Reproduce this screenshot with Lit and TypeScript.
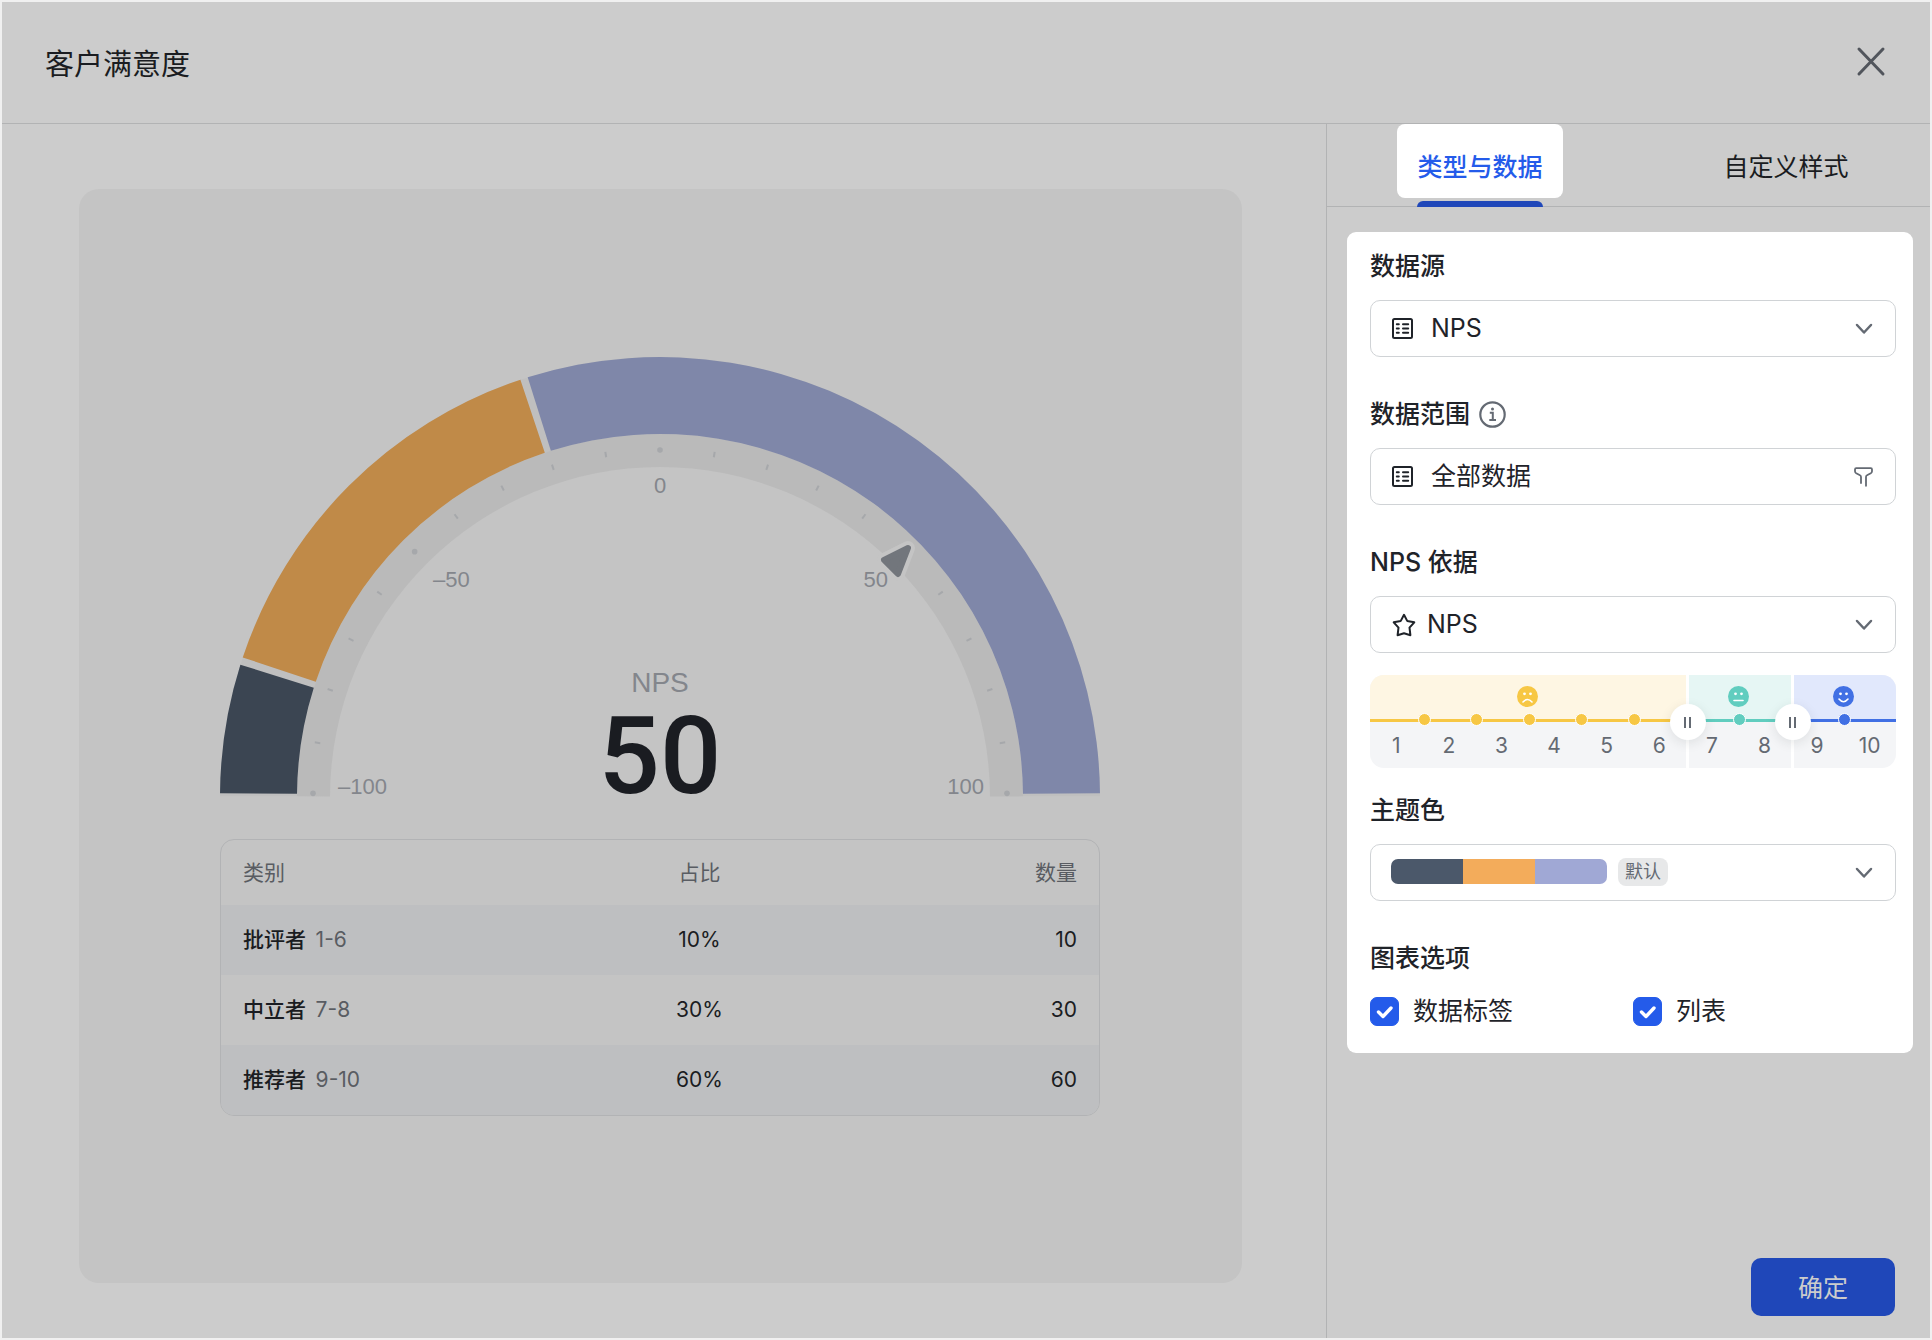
import { LitElement, html, css, svg } from "lit";
import { customElement, state } from "lit/decorators.js";

const CX = 440;
const CY = 440;

const polar = (r: number, deg: number): [number, number] => {
  const a = (deg * Math.PI) / 180;
  return [CX - r * Math.cos(a), CY - r * Math.sin(a)];
};

const ringPath = (outer: number, inner: number, from: number, to: number) => {
  const [x1, y1] = polar(outer, from);
  const [x2, y2] = polar(outer, to);
  const [x3, y3] = polar(inner, to);
  const [x4, y4] = polar(inner, from);
  return `M${x1} ${y1}A${outer} ${outer} 0 0 1 ${x2} ${y2}L${x3} ${y3}A${inner} ${inner} 0 0 0 ${x4} ${y4}Z`;
};

const FONT = css`"Inter", "Noto Sans CJK SC", sans-serif`;

@customElement("nps-gauge")
export class NpsGauge extends LitElement {
  static styles = css`
    :host {
      display: block;
    }
    svg {
      display: block;
      width: 100%;
      overflow: visible;
    }
    text {
      font-family: "Liberation Sans", sans-serif;
      font-size: 22px;
      fill: #83868c;
    }
    .caption {
      font-size: 28px;
      text-anchor: middle;
    }
    .score {
      font-family: Roboto, sans-serif;
      font-size: 108px;
      font-weight: 500;
      fill: #1a1c21;
      text-anchor: middle;
    }
    .middle {
      text-anchor: middle;
    }
    .end {
      text-anchor: end;
    }
  `;

  private segments = [
    { share: 10, color: "#3b4552" },
    { share: 30, color: "#c08a48" },
    { share: 60, color: "#7f87a9" },
  ];

  private renderTick(i: number) {
    const deg = i * 9;
    if (i % 5 === 0) {
      const [x, y] = polar(347, Math.min(Math.max(deg, 0.6), 179.4));
      return svg`<circle cx=${x} cy=${y} r="2.8" fill="#a6a8ab" />`;
    }
    const [x1, y1] = polar(344, deg);
    const [x2, y2] = polar(349.5, deg);
    return svg`<line x1=${x1} y1=${y1} x2=${x2} y2=${y2} stroke="#a6a8ab" stroke-width="2" />`;
  }

  render() {
    let sum = 0;
    const arcs = this.segments.map((s) => {
      const from = sum * 1.8 + 0.5;
      sum += s.share;
      return svg`<path d=${ringPath(440, 363, from, sum * 1.8 - 0.5)} fill=${s.color} />`;
    });
    return html`
      <svg viewBox="0 0 880 440" role="img" aria-label="NPS 50">
        <path d=${ringPath(440, 363, 0.1, 179.9)} fill="#bfbfbf" />
        <path d=${ringPath(363, 330, 0.1, 179.9)} fill="#bababa" />
        ${arcs}
        ${Array.from({ length: 21 }, (_, i) => i)
          .filter((i) => i !== 15)
          .map((i) => this.renderTick(i))}
        <path
          d="M688 191L664 203L678 217Z"
          fill="#c4c4c4"
          stroke="#c4c4c4"
          stroke-width="14"
          stroke-linejoin="round"
        />
        <path
          d="M688 191L664 203L678 217Z"
          fill="#72767c"
          stroke="#72767c"
          stroke-width="6"
          stroke-linejoin="round"
        />
        <text x="118" y="437">–100</text>
        <text x="213" y="230">–50</text>
        <text class="middle" x="440" y="136">0</text>
        <text class="end" x="668" y="230">50</text>
        <text class="end" x="764" y="437">100</text>
        <text class="caption" x="440" y="335">NPS</text>
        <text class="score" x="440" y="436">50</text>
      </svg>
    `;
  }
}

@customElement("score-scale")
export class ScoreScale extends LitElement {
  static styles = css`
    :host {
      display: block;
      position: relative;
      font-family: ${FONT};
    }
    .track {
      display: grid;
      grid-template-columns: 6fr 2fr 2fr;
      border-radius: 14px;
      overflow: hidden;
    }
    .segment {
      position: relative;
      background: #f4f5f7;
    }
    .segment + .segment::before {
      content: "";
      position: absolute;
      inset: 0 auto 0 0;
      width: 3px;
      background: #fff;
      z-index: 1;
    }
    .mood {
      height: 42px;
      padding-bottom: 2px;
      display: flex;
      justify-content: center;
      align-items: center;
      border-bottom: 3px solid var(--tone);
      background: var(--tint);
    }
    .mood svg {
      display: block;
    }
    .bad {
      --tone: #f7c744;
      --tint: #fef6e3;
    }
    .neutral {
      --tone: #61cdbf;
      --tint: #e6f6f4;
    }
    .good {
      --tone: #4170e4;
      --tint: #e1e8fc;
    }
    .numbers {
      display: flex;
      height: 46px;
      line-height: 48px;
      font-size: 21px;
      color: #646a73;
    }
    .numbers span {
      flex: 1;
      text-align: center;
    }
    .dot {
      position: absolute;
      top: 38px;
      width: 11px;
      height: 11px;
      margin-left: -5px;
      border: 1px solid #fff;
      border-radius: 50%;
      background: var(--tone);
    }
    .handle {
      position: absolute;
      top: 29px;
      width: 36px;
      height: 36px;
      margin-left: -16px;
      padding: 0;
      border: 0;
      border-radius: 50%;
      background: #fff;
      box-shadow: 0 3px 12px rgba(31, 35, 41, 0.1);
      display: flex;
      align-items: center;
      justify-content: center;
      gap: 3px;
      z-index: 2;
    }
    .handle i {
      width: 2px;
      height: 11px;
      background: #646a73;
    }
  `;

  private groups = [
    { tone: "bad", from: 1, to: 6, mouth: "M6 16Q10.5 11 15 16" },
    { tone: "neutral", from: 7, to: 8, mouth: "M6 14.5H15" },
    { tone: "good", from: 9, to: 10, mouth: "M6 13Q10.5 18.5 15 13" },
  ];

  private range(a: number, b: number) {
    return Array.from({ length: b - a + 1 }, (_, i) => a + i);
  }

  render() {
    return html`
      <div class="track">
        ${this.groups.map(
          (g) => html`
            <div class="segment ${g.tone}">
              <div class="mood">
                <svg width="21" height="21" viewBox="0 0 21 21" aria-hidden="true">
                  <circle cx="10.5" cy="10.5" r="10.5" fill="var(--tone)" />
                  <circle cx="7.5" cy="7.8" r="1.4" fill="#fff" />
                  <circle cx="13.5" cy="7.8" r="1.4" fill="#fff" />
                  <path d=${g.mouth} fill="none" stroke="#fff" stroke-width="1.6" stroke-linecap="round" />
                </svg>
              </div>
              <div class="numbers">${this.range(g.from, g.to).map((n) => html`<span>${n}</span>`)}</div>
            </div>
          `,
        )}
      </div>
      ${this.groups.flatMap((g) =>
        this.range(g.from, g.to - 1).map(
          (n) => html`<span class="dot ${g.tone}" style="left:${n * 10}%"></span>`,
        ),
      )}
      ${[6, 8].map(
        (n) => html`
          <button class="handle" style="left:${n * 10}%" aria-label="分界 ${n}"><i></i><i></i></button>
        `,
      )}
    `;
  }
}

const tableIcon = html`
  <svg width="21" height="21" viewBox="0 0 21 21" fill="none" stroke="currentColor" stroke-width="2" aria-hidden="true">
    <rect x="1" y="1" width="19" height="19" rx="1.5" />
    <path d="M4.8 6.3H6.8M11 6.3H16.2M4.8 10.5H6.8M11 10.5H16.2M4.8 14.7H6.8M11 14.7H16.2" stroke-linecap="round" />
  </svg>
`;

const starIcon = html`
  <svg width="24" height="24" viewBox="0 0 24 24" fill="none" stroke="currentColor" stroke-width="2" stroke-linejoin="round" aria-hidden="true">
    <path d="M12 1.8L15.2 7.9L22.3 9.3L17.5 14.7L18.4 22.2L12 20.3L5.6 22.2L6.5 14.7L1.7 9.3L8.8 7.9Z" />
  </svg>
`;

const chevron = html`
  <svg class="tail" width="18" height="12" viewBox="0 0 18 12" fill="none" stroke="#646a73" stroke-width="2.5" stroke-linecap="round" stroke-linejoin="round" aria-hidden="true">
    <path d="M2 2L9 9.5L16 2" />
  </svg>
`;

@customElement("app-root")
export class AppRoot extends LitElement {
  static styles = css`
    :host {
      display: block;
      font-family: ${FONT};
      color: #1f2329;
    }
    * {
      box-sizing: border-box;
    }
    button,
    select {
      font: inherit;
      color: inherit;
    }
    .dialog {
      min-height: 100vh;
      display: flex;
      flex-direction: column;
      background: #ccc;
      border: 2px solid #f0f0f0;
    }
    .head {
      display: flex;
      align-items: center;
      justify-content: space-between;
      height: 122px;
      padding: 0 43px;
      border-bottom: 1px solid #b2b3b4;
      color: #1a1c21;
    }
    h1 {
      margin: 0;
      padding-top: 4px;
      font-size: 29px;
      line-height: 42px;
      font-weight: 400;
    }
    .close {
      padding: 0 0 2px;
      border: 0;
      background: none;
    }
    .close svg {
      display: block;
    }
    .body {
      flex: 1;
      display: flex;
    }
    .preview {
      flex: 1;
      display: flex;
      padding: 65px 84px 55px 77px;
    }
    .canvas {
      flex: 1;
      display: flex;
      flex-direction: column;
      justify-content: center;
      gap: 42px;
      padding: 0 142px 0 141px;
      border-radius: 20px;
      background: #c4c4c4;
    }
    .result {
      border: 1px solid #b2b3b5;
      border-radius: 14px;
      overflow: hidden;
    }
    table {
      width: 100%;
      border-collapse: collapse;
      table-layout: fixed;
      font-size: 21px;
      line-height: 30px;
      color: #1a1c21;
    }
    th,
    td {
      height: 70px;
      padding: 1px 22px 0;
      text-align: left;
      font-weight: 400;
    }
    thead th {
      height: 65px;
      color: #595c62;
    }
    tbody th {
      font-weight: 500;
    }
    tbody tr:nth-child(odd) {
      background: #bebfc1;
    }
    .kind {
      width: 38%;
    }
    .share {
      width: 33%;
      text-align: center;
    }
    .count {
      text-align: right;
    }
    .range {
      margin-left: 4px;
      font-weight: 400;
      color: #595c62;
    }
    .side {
      flex: 0 0 604px;
      display: flex;
      flex-direction: column;
      border-left: 1px solid #b2b3b4;
      overflow: hidden;
    }
    .tabs {
      display: grid;
      grid-template-columns: 1fr 1fr;
      justify-items: center;
      height: 83px;
      margin-right: -9px;
      border-bottom: 1px solid #b2b3b4;
    }
    .tab {
      position: relative;
      height: 74px;
      padding: 8px 20px 0;
      border: 0;
      border-radius: 8px;
      background: none;
      font-size: 25px;
      color: #1a1c21;
    }
    .tab.active {
      background: #fff;
      color: #245bea;
      font-weight: 500;
    }
    .tab.active::after {
      content: "";
      position: absolute;
      left: 20px;
      right: 20px;
      bottom: -9px;
      height: 6px;
      border-radius: 6px 6px 0 0;
      background: #1f47b9;
    }
    .card {
      margin: 25px 17px 0 20px;
      padding: 16px 17px 26px 23px;
      border-radius: 9px;
      background: #fff;
      font-size: 25px;
      line-height: 36px;
    }
    .label {
      display: flex;
      align-items: center;
      gap: 9px;
      margin-bottom: 16px;
      font-weight: 500;
    }
    .field {
      display: grid;
      align-items: center;
      margin-bottom: 39px;
    }
    .field > * {
      grid-area: 1 / 1;
    }
    .field svg {
      pointer-events: none;
    }
    .lead {
      display: flex;
      margin-left: 22px;
    }
    .tail {
      justify-self: end;
      margin-right: 23px;
    }
    .box {
      width: 100%;
      height: 57px;
      padding: 0 60px 2px;
      border: 1px solid #d0d3d6;
      border-radius: 10px;
      background: #fff;
      appearance: none;
      text-align: left;
    }
    .box.star {
      padding-left: 56px;
    }
    .box.theme {
      display: flex;
      align-items: center;
      gap: 11px;
      padding-left: 20px;
    }
    .swatches {
      display: flex;
      width: 216px;
      height: 25px;
      border-radius: 7px;
      overflow: hidden;
    }
    .swatches i {
      flex: 1;
    }
    .slate {
      background: #4b586a;
    }
    .amber {
      background: #f3ac5b;
    }
    .lilac {
      background: #a0a8d5;
    }
    .badge {
      padding: 0 7px;
      border-radius: 8px;
      background: #e7e8e9;
      color: #646a73;
      font-size: 18px;
      line-height: 28px;
    }
    .field.tight {
      margin-bottom: 22px;
    }
    score-scale {
      margin-bottom: 24px;
    }
    .options {
      display: grid;
      grid-template-columns: 1fr 1fr;
      margin: 0;
      padding: 0;
      border: 0;
    }
    .options legend {
      margin-bottom: 19px;
      padding: 0;
    }
    .check {
      display: flex;
      align-items: center;
      gap: 14px;
      height: 32px;
    }
    .check span {
      display: grid;
    }
    .check span > * {
      grid-area: 1 / 1;
      margin: 0;
    }
    .check input {
      appearance: none;
      width: 29px;
      height: 29px;
      border: 1px solid #8f959e;
      border-radius: 7px;
    }
    .check svg {
      display: block;
      pointer-events: none;
    }
    .check input:checked {
      border-color: #245bea;
      background: #245bea;
    }
    .foot {
      margin-top: auto;
      padding: 0 35px 22px;
      text-align: right;
    }
    .confirm {
      width: 144px;
      height: 58px;
      padding: 0 0 2px;
      border: 0;
      border-radius: 10px;
      background: #1f47b9;
      color: #ccc;
      font-size: 25px;
    }
  `;

  @state() private tab = 0;

  private rows = [
    ["批评者", "1-6", "10%", "10"],
    ["中立者", "7-8", "30%", "30"],
    ["推荐者", "9-10", "60%", "60"],
  ];

  private renderCheck(text: string) {
    return html`
      <label class="check">
        <span>
          <input type="checkbox" checked />
          <svg width="29" height="29" viewBox="0 0 29 29" fill="none" stroke="#fff" stroke-width="3.4" stroke-linecap="round" stroke-linejoin="round" aria-hidden="true">
            <path d="M8.5 15L13 19.5L21 11" />
          </svg>
        </span>
        ${text}
      </label>
    `;
  }

  render() {
    return html`
      <div class="dialog">
        <header class="head">
          <h1>客户满意度</h1>
          <button class="close" aria-label="关闭">
            <svg width="32" height="32" viewBox="0 0 32 32" fill="none" stroke="#51555c" stroke-width="3" stroke-linecap="round">
              <path d="M4 3L28 28M28 3L4 28" />
            </svg>
          </button>
        </header>
        <div class="body">
          <main class="preview">
            <section class="canvas">
              <nps-gauge></nps-gauge>
              <div class="result">
                <table>
                  <thead>
                    <tr>
                      <th class="kind">类别</th>
                      <th class="share">占比</th>
                      <th class="count">数量</th>
                    </tr>
                  </thead>
                  <tbody>
                    ${this.rows.map(
                      ([name, range, share, count]) => html`
                        <tr>
                          <th>${name} <span class="range">${range}</span></th>
                          <td class="share">${share}</td>
                          <td class="count">${count}</td>
                        </tr>
                      `,
                    )}
                  </tbody>
                </table>
              </div>
            </section>
          </main>
          <aside class="side">
            <nav class="tabs" role="tablist">
              ${["类型与数据", "自定义样式"].map(
                (name, i) => html`
                  <button
                    class="tab ${this.tab === i ? "active" : ""}"
                    role="tab"
                    aria-selected=${this.tab === i}
                    @click=${() => (this.tab = i)}
                  >
                    ${name}
                  </button>
                `,
              )}
            </nav>
            <div class="card">
              <label class="label" for="source">数据源</label>
              <div class="field">
                <select class="box" id="source">
                  <option>NPS</option>
                </select>
                <span class="lead">${tableIcon}</span>
                ${chevron}
              </div>

              <label class="label" for="scope">
                数据范围
                <svg width="27" height="27" viewBox="0 0 27 27" fill="none" stroke="#646a73" stroke-width="2.2" aria-hidden="true">
                  <circle cx="13.5" cy="13.5" r="12.2" />
                  <path d="M10.8 11.8H13.8V18.5M10.3 19H17" stroke-width="2" />
                  <circle cx="13.5" cy="8" r="1.5" fill="#646a73" stroke="none" />
                </svg>
              </label>
              <div class="field">
                <button class="box" id="scope">全部数据</button>
                <span class="lead">${tableIcon}</span>
                <svg class="tail" width="19" height="20" viewBox="0 0 19 20" fill="none" stroke="#646a73" stroke-width="1.8" stroke-linecap="round" stroke-linejoin="round" aria-hidden="true">
                  <path d="M7 16V10Q7 8.8 6 8.3L2.2 6.2Q1 5.5 1 4.2V2.5Q1 1.2 2.2 1.2H16.8Q18 1.2 18 2.5V4.2Q18 5.5 16.8 6.2L13 8.3Q12 8.8 12 10V18.8" />
                </svg>
              </div>

              <label class="label" for="basis">NPS 依据</label>
              <div class="field tight">
                <select class="box star" id="basis">
                  <option>NPS</option>
                </select>
                <span class="lead">${starIcon}</span>
                ${chevron}
              </div>
              <score-scale></score-scale>

              <label class="label" for="theme">主题色</label>
              <div class="field">
                <button class="box theme" id="theme" aria-haspopup="listbox">
                  <span class="swatches"><i class="slate"></i><i class="amber"></i><i class="lilac"></i></span>
                  <span class="badge">默认</span>
                </button>
                ${chevron}
              </div>

              <fieldset class="options">
                <legend class="label">图表选项</legend>
                ${this.renderCheck("数据标签")} ${this.renderCheck("列表")}
              </fieldset>
            </div>
            <footer class="foot">
              <button class="confirm">确定</button>
            </footer>
          </aside>
        </div>
      </div>
    `;
  }
}
